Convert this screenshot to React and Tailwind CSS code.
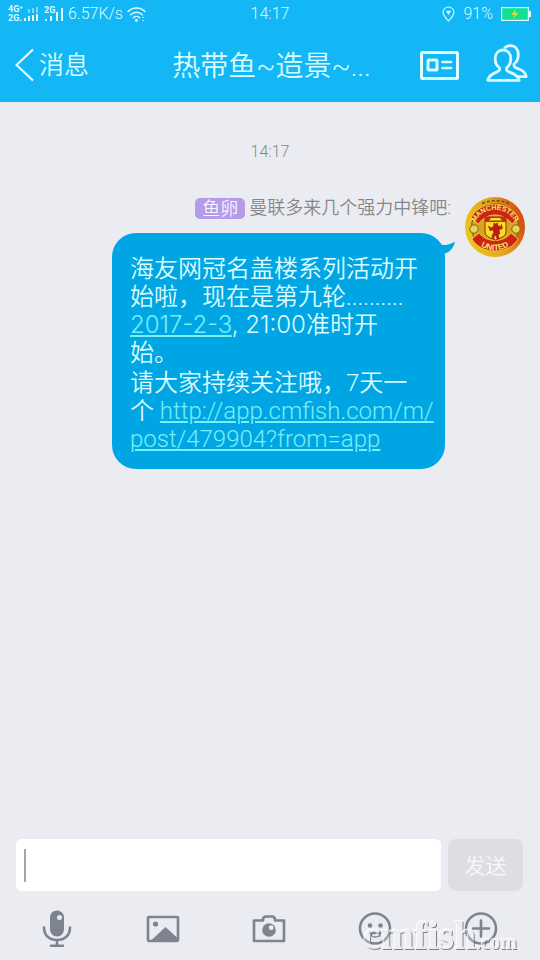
import React from "react";

function StatusBar() {
  return (
    <div className="grid h-7 grid-cols-[1fr_auto_1fr] items-center pl-2 pr-2 text-base font-light">
      <div className="flex items-center">
        <div className="flex flex-col text-[9px] font-bold leading-[9px]">
          <span>4G⁺</span>
          <span>2G.</span>
        </div>
        <svg width="15" height="14" viewBox="0 0 15 14" fill="currentColor" aria-hidden="true">
          <rect x="1" y="11" width="2" height="3" />
          <rect x="5" y="9" width="2" height="5" />
          <rect x="9" y="8" width="2" height="6" />
          <rect x="13" y="7" width="2" height="7" />
          <g opacity="0.5">
            <rect x="5" y="2" width="2" height="4" />
            <rect x="9" y="1" width="2" height="5" />
            <rect x="13" y="0" width="2" height="6" />
          </g>
        </svg>
        <svg className="ml-1.5" width="20" height="16" viewBox="0 0 20 16" fill="currentColor" aria-hidden="true">
          <text x="0" y="7" fontSize="9" fontWeight="700">2G</text>
          <rect x="1" y="13" width="2" height="2" />
          <rect x="6" y="10" width="2" height="5" />
          <rect x="12" y="6" width="2" height="9" />
          <rect x="17" y="2" width="2" height="13" />
        </svg>
        <span className="ml-1">6.57K/s</span>
        <svg className="ml-1" width="19" height="15" viewBox="0 0 19 15" fill="none" stroke="currentColor" strokeWidth="1.4" strokeLinecap="round" aria-hidden="true">
          <path d="M1 4.6C5.5-.2 13.5-.2 18 4.6" />
          <path d="M3.7 7.8C7 4.4 12 4.4 15.3 7.8" />
          <path d="M6.3 10.8c1.8-1.700 4.600-1.700 6.400 0" />
          <circle cx="9.5" cy="13.3" r=".8" fill="currentColor" />
          <path d="M16 10.5v.1M16 13.5v.1" />
        </svg>
      </div>
      <span>14:17</span>
      <div className="flex items-center justify-end">
        <svg width="13" height="16" viewBox="0 0 13 16" fill="none" stroke="currentColor" strokeWidth="1.1" aria-hidden="true">
          <path d="M6.5 15C4.5 12.5 1 9.5 1 6.3a5.5 5.3 0 0 1 11 0C12 9.5 8.5 12.500 6.500 15Z" />
          <path d="M4.8 5.300h3.400L6.500 8Z" fill="currentColor" />
        </svg>
        <span className="ml-2">91%</span>
        <svg className="ml-2" width="31" height="14" viewBox="0 0 31 14" aria-hidden="true">
          <rect x=".6" y=".6" width="26.8" height="12.8" fill="#12df92" stroke="currentColor" strokeWidth="1.2" />
          <rect x="28" y="4" width="2" height="6" fill="currentColor" />
          <path d="M15 2 10 8h3.500L12 12l5.500-6H14Z" fill="#e5d83a" />
        </svg>
      </div>
    </div>
  );
}

function NavBar() {
  return (
    <div className="grid h-[74px] grid-cols-[1fr_auto_1fr] items-center pl-[15px] pr-3">
      <button type="button" className="flex items-center text-[25px]">
        <svg width="20" height="34" viewBox="0 0 20 34" fill="none" stroke="currentColor" strokeWidth="2.2" aria-hidden="true">
          <path d="M18 1.5 1.5 17 18 32.500" />
        </svg>
        <span className="ml-1 pt-0.5">消息</span>
      </button>
      <h1 className="pt-1 text-[28px]">热带鱼~造景~...</h1>
      <div className="flex items-center justify-end gap-[27px]">
        <button type="button" aria-label="群名片">
          <svg width="39" height="29" viewBox="0 0 39 29" fill="none" stroke="currentColor" strokeWidth="3" aria-hidden="true">
            <rect x="1.5" y="1.5" width="36" height="26" rx="1" />
            <rect x="8" y="9" width="9" height="10" rx="1" />
            <path d="M22.500 11h8.500M22.500 17h8.500" strokeLinecap="round" strokeWidth="2.6" />
          </svg>
        </button>
        <button type="button" aria-label="群成员" className="-mt-1">
          <svg width="42" height="38" viewBox="0 0 42 38" fill="none" stroke="currentColor" strokeWidth="2.8" strokeLinejoin="round" strokeLinecap="round" aria-hidden="true">
            <path d="M13.500 23.800C10.800 22 9.200 18.500 9.200 14.800c0-5.500 3.300-8.800 7.800-8.800s7.800 3.300 7.800 8.800c0 3.700-1.600 7.200-4.300 9v1.700c0 1.300 1 1.800 3 2.600 5.500 2 8.700 3.700 9.700 8.200H1.700c1-4.500 3.800-6.200 8.800-8.200 2-.8 3-1.300 3-2.600Z" />
            <path d="M19 3.500c1.500-1.200 3.300-1.800 5.300-1.800 5 0 8 3.500 8 9 0 4-1.600 7.300-4.300 9.300v1.500c0 1.500 1 2 3 2.800 5.500 2 8.300 3.700 9.300 8.400h-7.500" />
          </svg>
        </button>
      </div>
    </div>
  );
}

function Avatar() {
  return (
    <svg className="size-[60px] shrink-0" viewBox="0 0 60 60" role="img" aria-label="Manchester United">
      <defs>
        <linearGradient id="gold" x1="0" y1="0.6" x2="1" y2="0.3">
          <stop offset="0" stopColor="#f0c51c" />
          <stop offset="0.55" stopColor="#e2a21c" />
          <stop offset="1" stopColor="#d3420f" />
        </linearGradient>
        <path id="arcTop" d="M10 26C17 8.500 43 8.500 50.500 26" />
        <path id="arcBottom" d="M10 42C17 57 43 57 50 42" />
      </defs>
      <circle cx="30" cy="30" r="30" fill="url(#gold)" />
      <circle cx="30" cy="30" r="23.5" fill="#d9a51c" stroke="#74601c" strokeWidth="1" />
      <path d="M17 6.500Q30 1 44 6.500" fill="none" stroke="#6b4e14" strokeWidth="1.500" strokeDasharray="3 2" />
      <path d="M6 21C15 2.500 44 2.500 53 21L47 27C39 15 21 15 13.500 27Z" fill="#cb2414" stroke="#f3d548" strokeWidth=".8" />
      <path d="M7 42l7-6c8 10 24 10 32 0l7 6C44 58 16 58 7 42Z" fill="#cb2414" stroke="#f3d548" strokeWidth=".8" />
      <circle cx="9" cy="32" r="4.200" fill="#e8d453" stroke="#80601a" />
      <circle cx="51" cy="32" r="4.200" fill="#e8d453" stroke="#80601a" />
      <path d="M20 20h21v15q0 5-10.500 8Q20 40 20 35Z" fill="#f7de21" stroke="#99281a" strokeWidth="1" />
      <path d="M20 20h21v5H20Z" fill="#cf2818" />
      <path d="M24 23.500h13l-2-2.500h-9Z" fill="#f7de21" />
      <path d="m29 26 1.500 1 2-1 .2 2.500 2.800 1.500 1-2.500.8 4-3.500 1.500 1 3-1.600 2.500 1 3h-2.300l-1-3.500-2 1.500.2 2h-2l.2-3.200 1.500-2.800-.8-2.800-2.800 1-1.700-4.500 2.500 1.800 2.700-1.500Z" fill="#b81f12" stroke="#b81f12" strokeWidth=".8" />
      <g fill="#fbe66d" fontFamily="Liberation Sans, Arial, sans-serif" fontWeight="700" textAnchor="middle">
        <text fontSize="7"><textPath href="#arcTop" startOffset="50%">MANCHESTER</textPath></text>
        <text fontSize="8"><textPath href="#arcBottom" startOffset="50%">UNITED</textPath></text>
      </g>
    </svg>
  );
}

const linkStyle = "text-[#78eef6] underline decoration-2 underline-offset-2";

function Message() {
  return (
    <article className="flex items-start justify-end gap-2.5 pr-[15px]">
      <div className="flex flex-col items-end">
        <div className="flex h-[22px] items-center gap-1 pr-1 text-[18px] leading-[22px] text-[#85868a]">
          <span className="rounded-[5px] bg-[#b59bea] px-[7px] leading-[21px] text-[#f6f3ff]">鱼卵</span>
          <span>曼联多来几个强力中锋吧:</span>
        </div>
        <div className="relative mr-2.5 mt-[14px] w-[333px] rounded-[24px] bg-[#00a6e4] px-[18px] pb-4 pt-[22px] text-[24px] leading-7 text-[#dcfcff]">
          <svg className="absolute -right-2.5 top-[7px]" width="24" height="16" viewBox="0 0 24 16" fill="#00a6e4" aria-hidden="true">
            <path d="M0 0 10 4.500C15 6 19 4.500 24 1.500 22.500 8 19 12 14 13.500L10 15Z" />
          </svg>
          <p>
            海友网冠名盖楼系列活动开
            <br />
            始啦，现在是第九轮..........
            <br />
            <span className="font-[Inter,'Noto_Sans_CJK_SC',sans-serif] font-light">
              <a href="#date" className={linkStyle}>2017-2-3</a>, 21:00
            </span>
            准时开
            <br />
            始。
          </p>
          <p className="mt-0.5 whitespace-nowrap">
            请大家持续关注哦，7天一
            <br />
            个{" "}
            <a href="http://app.cmfish.com/m/post/479904?from=app" className={linkStyle}>
              http://app.cmfish.com/m/
              <br />
              post/479904?from=app
            </a>
          </p>
        </div>
      </div>
      <Avatar />
    </article>
  );
}

function ToolButton({ label, children }) {
  return (
    <button type="button" aria-label={label} className="flex h-[52px] items-center justify-center">
      <svg width="38" height="38" viewBox="0 0 38 38" fill="none" stroke="currentColor" strokeWidth="2.6" strokeLinecap="round" strokeLinejoin="round" aria-hidden="true">
        {children}
      </svg>
    </button>
  );
}

function Watermark() {
  return (
    <svg className="pointer-events-none absolute bottom-0 right-[15px]" width="164" height="44" viewBox="0 0 164 44">
      <defs>
        <filter id="emboss" x="-5%" y="-20%" width="110%" height="140%">
          <feOffset in="SourceAlpha" dx="1" dy="1.2" result="down" />
          <feComposite in="down" in2="SourceAlpha" operator="out" result="edgeDown" />
          <feFlood floodColor="#6c6c72" floodOpacity="0.85" />
          <feComposite in2="edgeDown" operator="in" result="dark" />
          <feOffset in="SourceAlpha" dx="-1" dy="-1" result="up" />
          <feComposite in="up" in2="SourceAlpha" operator="out" result="edgeUp" />
          <feFlood floodColor="#ffffff" floodOpacity="0.9" />
          <feComposite in2="edgeUp" operator="in" result="light" />
          <feFlood floodColor="#f4f4f7" floodOpacity="0.3" />
          <feComposite in2="SourceAlpha" operator="in" result="face" />
          <feMerge>
            <feMergeNode in="face" />
            <feMergeNode in="dark" />
            <feMergeNode in="light" />
          </feMerge>
        </filter>
      </defs>
      <text x="2" y="33" filter="url(#emboss)" fontFamily="Liberation Serif, serif" fontWeight="700" fontSize="40">
        cmfish<tspan fontSize="20">.com</tspan>
      </text>
    </svg>
  );
}

function Composer() {
  return (
    <footer className="relative">
      <form className="flex gap-[7px] pl-4 pr-[17px]" onSubmit={(e) => e.preventDefault()}>
        <div className="relative flex h-[52px] flex-1 rounded-md bg-white">
          <input aria-label="输入消息" className="w-full min-w-0 bg-transparent px-2 text-xl outline-none" />
          <span className="pointer-events-none absolute left-2 top-2.5 h-[33px] w-0.5 bg-[#a4a5a8]" />
        </div>
        <button type="submit" className="h-[52px] w-[75px] rounded-lg bg-[#dddee2] pt-1 text-[21px] text-[#f8f8fa]">
          发送
        </button>
      </form>
      <div className="mt-3 grid grid-cols-5 pb-[5px] pl-1 pr-1.5 text-[#7e8391]">
        <ToolButton label="语音">
          <rect x="12" y="0.5" width="14" height="26" rx="7" fill="currentColor" stroke="none" />
          <circle cx="21.5" cy="7.5" r="2.5" fill="#ebecf1" stroke="none" />
          <path d="M6 17.500c0 8 5.500 12.500 13 12.500s13-4.500 13-12.500M19 30v5M13 35.700h12" />
        </ToolButton>
        <ToolButton label="图片">
          <rect x="4" y="7" width="30" height="24" rx="1" />
          <circle cx="11.5" cy="14" r="2.6" fill="currentColor" stroke="none" />
          <path d="M7 30.500 21.500 17 33 27.500v3Z" fill="currentColor" stroke="none" />
        </ToolButton>
        <ToolButton label="拍照">
          <path d="M4 10.500h9V8.500l2-2h8l2 2v2h9V31H4Z" />
          <circle cx="19" cy="20" r="6.8" fill="currentColor" stroke="none" />
          <circle cx="21.2" cy="17.7" r="2.4" fill="#ebecf1" stroke="none" />
        </ToolButton>
        <ToolButton label="表情">
          <circle cx="19" cy="18.5" r="15" />
          <circle cx="14" cy="15.5" r="2.3" fill="currentColor" stroke="none" />
          <circle cx="24.5" cy="15.5" r="2.3" fill="currentColor" stroke="none" />
          <path d="M14 22.500c2 1.300 8 1.300 10.500 0-.5 3-2.500 4.500-5.200 4.500S14.500 25.500 14 22.500Z" strokeWidth="1.500" />
        </ToolButton>
        <ToolButton label="更多">
          <circle cx="19" cy="18.5" r="15" />
          <path d="M19 10.500v16M11 18.500h16" />
        </ToolButton>
      </div>
      <Watermark />
    </footer>
  );
}

export default function App() {
  return (
    <div className="flex min-h-screen flex-col bg-[#ebecf1] font-[Roboto,'Noto_Sans_CJK_SC',sans-serif] font-[350]">
      <header className="bg-[#13b7f5] text-[#dcfcff]">
        <StatusBar />
        <NavBar />
      </header>
      <main className="flex-1">
        <p className="mt-[38px] text-center text-base font-light text-[#85868a]">14:17</p>
        <div className="mt-[33px]">
          <Message />
        </div>
      </main>
      <Composer />
    </div>
  );
}
